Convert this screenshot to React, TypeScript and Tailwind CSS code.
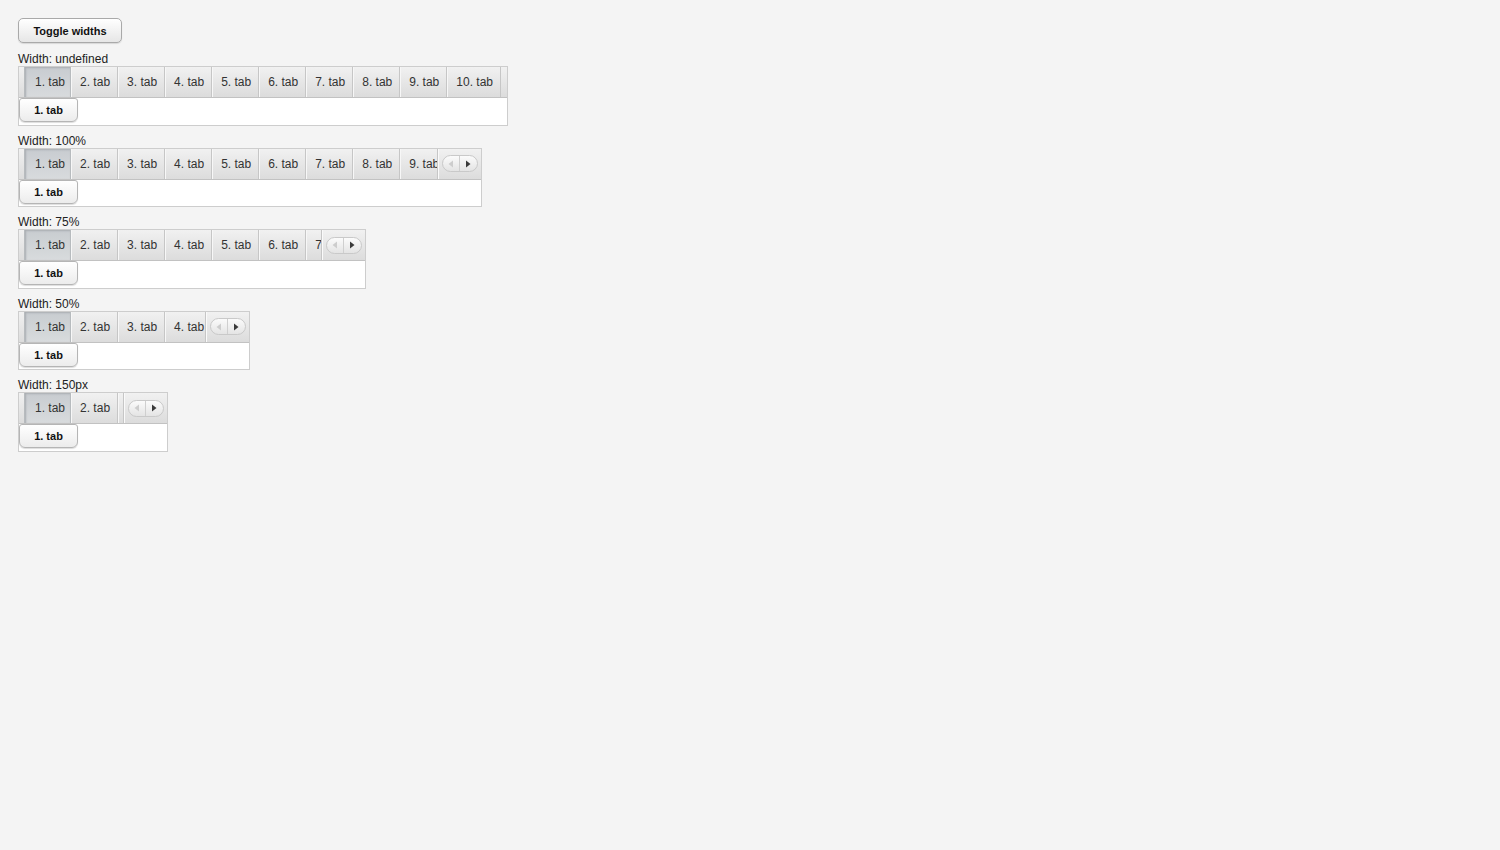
import { useState } from 'react'

/* ─── Data ─── */

const TABS = Array.from({ length: 10 }, (_, i) => `${i + 1}. tab`)

const VIEWS = [
  { label: 'undefined', width: '', scroll: false },
  { label: '100%', width: 'w-full', scroll: true },
  { label: '75%', width: 'w-3/4', scroll: true },
  { label: '50%', width: 'w-1/2', scroll: true },
  { label: '150px', width: 'w-[150px]', scroll: true },
]

/* ─── Scroll buttons ─── */

function ScrollButtons() {
  return (
    <div className="flex h-full w-[44px] shrink-0 items-center justify-center border-l border-[#c6c6c6] shadow-[inset_1px_0_0_#fafafa]">
      <div className="flex h-[17px] w-[36px] items-center rounded-full border border-[#c9c9c9] bg-gradient-to-b from-[#fbfbfb] to-[#e4e4e4]">
        <div className="flex h-full flex-1 items-center justify-center border-r border-[#cfcfcf]">
          <svg width="6" height="8" viewBox="0 0 6 8">
            <path d="M5 0.5v7L0.5 4z" fill="#cdcdcd" />
          </svg>
        </div>
        <div className="flex h-full flex-1 items-center justify-center">
          <svg width="6" height="8" viewBox="0 0 6 8">
            <path d="M1 0.5v7L5.5 4z" fill="#3a3a3a" />
          </svg>
        </div>
      </div>
    </div>
  )
}

/* ─── Tab view ─── */

function TabView({ width, scroll }: { width: string; scroll: boolean }) {
  return (
    <div className={`${width || 'w-max'} border border-[#cdcdcd] bg-white`}>
      {/* Tab bar */}
      <div className="flex h-[31px] border-b border-[#c2c2c2] bg-gradient-to-b from-[#f1f1f1] to-[#dcdcdc]">
        <div className="flex min-w-0 flex-1 overflow-hidden pl-[5px]">
          {TABS.map((t, i) => (
            <div
              key={t}
              className={
                i === 0
                  ? 'flex h-full shrink-0 items-center border-x border-[#b7bbbe] bg-gradient-to-b from-[#c8ccd0] to-[#d8dbdd] pl-[10px] pr-[5px] text-[#333] shadow-[inset_1px_1px_2px_#a9adb1]'
                  : 'flex h-full shrink-0 items-center border-r border-[#c6c6c6] pl-[9px] pr-[7px] text-[#333] shadow-[inset_1px_0_0_#f7f7f7]'
              }
            >
              {t}
            </div>
          ))}
          {!scroll && <div className="w-[6px] shrink-0" />}
        </div>
        {scroll && <ScrollButtons />}
      </div>

      {/* Content */}
      <div className="h-[26.5px]">
        <button className="flex h-[24px] w-[59px] items-center justify-center rounded-b-[6px] rounded-t-[3px] border border-[#b5b5b5] bg-gradient-to-b from-white to-[#ececec] text-[11px] font-bold text-[#111] shadow-[0_1px_1px_#ddd]">
          1. tab
        </button>
      </div>
    </div>
  )
}

/* ─── Main Component ─── */

export default function App() {
  const [wide, setWide] = useState(true)

  return (
    <div className="min-h-[850px] bg-[#f4f4f4] pl-[18px] pt-[18px] font-['Liberation_Sans',Arial,sans-serif] text-[12px] leading-[14px] text-[#222]">
      <button
        onClick={() => setWide(!wide)}
        className="h-[25px] w-[104px] rounded-[5px] border border-[#a9a9a9] bg-gradient-to-b from-white to-[#e6e6e6] text-[11px] font-bold text-[#111] shadow-[0_1px_1px_#d8d8d8]"
      >
        Toggle widths
      </button>

      <div className="mt-[9px] w-[464px]">
        {VIEWS.map((v) => (
          <div key={v.label} className="mb-[8px]">
            <div className="h-[14px]">Width: {v.label}</div>
            <TabView width={wide ? v.width : ''} scroll={wide && v.scroll} />
          </div>
        ))}
      </div>
    </div>
  )
}
